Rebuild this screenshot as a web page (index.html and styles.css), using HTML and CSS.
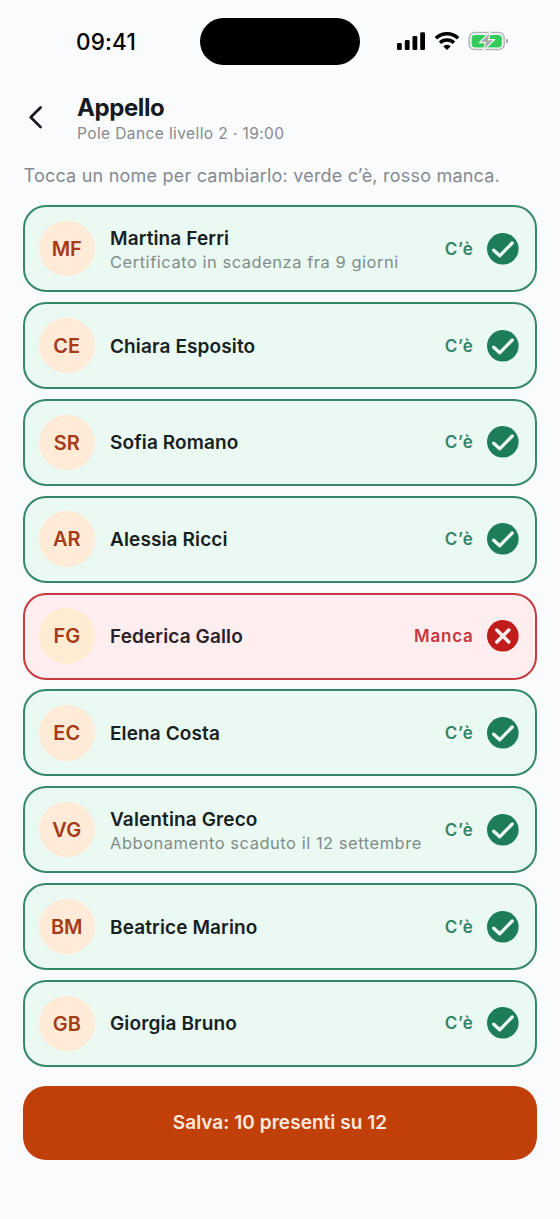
FILE: index.html
```html
<!DOCTYPE html>
<html lang="it">
<head>
<meta charset="utf-8">
<title>Appello</title>
<link rel="stylesheet" href="styles.css">
</head>
<body>
<svg class="defs" width="0" height="0" aria-hidden="true">
  <symbol id="check" viewBox="0 0 32 32"><circle cx="15.8" cy="15.8" r="15.8" fill="#1c7d58"/><path d="M6.7 17.2L12.7 22.8L25.2 10" fill="none" stroke="#effbf5" stroke-width="3.3" stroke-linecap="round" stroke-linejoin="round"/></symbol>
  <symbol id="cross" viewBox="0 0 32 32"><circle cx="15.8" cy="15.8" r="15.8" fill="#c11c1c"/><path d="M9.8 10L21.8 22M21.8 10L9.8 22" fill="none" stroke="#ffeeee" stroke-width="3.5" stroke-linecap="round"/></symbol>
</svg>
<div class="screen">
  <div class="status">
    <div class="time">09:41</div>
    <div class="island"></div>
    <svg class="indicators" width="116" height="24" viewBox="0 0 116 24">
      <g fill="#000">
        <rect x="1" y="14" width="4.8" height="7" rx="1.3"/>
        <rect x="8.8" y="11" width="4.8" height="10" rx="1.3"/>
        <rect x="16.5" y="7" width="4.8" height="14" rx="1.3"/>
        <rect x="24.2" y="3.3" width="4.8" height="17.7" rx="1.3"/>
      </g>
      <g fill="none" stroke="#000" stroke-width="3.5">
        <path d="M39.9 9.3A16 16 0 0 1 62.1 9.3"/>
        <path d="M44 13.7A10.2 10.2 0 0 1 58 13.7"/>
      </g>
      <path d="M47.2 17.2A5.4 5.4 0 0 1 54.8 17.2L51 21Z" fill="#000"/>
      <rect x="73.2" y="3.6" width="35" height="17" rx="5.4" fill="none" stroke="#b1b3b4" stroke-width="1.5"/>
      <rect x="75.6" y="6" width="30.2" height="12.4" rx="3.4" fill="#32cc5a"/>
      <path d="M110 9.6V14.8Q112.3 14 112.3 12.2Q112.3 10.4 110 9.6Z" fill="#a6a8aa"/>
      <path d="M94.4 2.5L83.4 13.6H89.4L87 22L98.6 10.6H92.6Z" fill="#a9abad" stroke="#f4fbf8" stroke-width="1.1" stroke-linejoin="round"/>
    </svg>
  </div>
  <header class="header">
    <svg class="back" width="24" height="28" viewBox="0 0 24 28"><path d="M16.6 4.5L6.7 14.3L16.6 24.1" fill="none" stroke="#14161d" stroke-width="2.7" stroke-linecap="round" stroke-linejoin="round"/></svg>
    <div>
      <h1 class="title">Appello</h1>
      <div class="subtitle">Pole Dance livello 2 · 19:00</div>
    </div>
  </header>
  <p class="hint">Tocca un nome per cambiarlo: verde c’è, rosso manca.</p>
  <main class="list">
    <div class="card"><div class="avatar">MF</div><div class="person"><div class="name">Martina Ferri</div><div class="note">Certificato in scadenza fra 9 giorni</div></div><div class="state">C’è</div><svg class="mark"><use href="#check"/></svg></div>
    <div class="card"><div class="avatar">CE</div><div class="person"><div class="name">Chiara Esposito</div></div><div class="state">C’è</div><svg class="mark"><use href="#check"/></svg></div>
    <div class="card"><div class="avatar">SR</div><div class="person"><div class="name">Sofia Romano</div></div><div class="state">C’è</div><svg class="mark"><use href="#check"/></svg></div>
    <div class="card"><div class="avatar">AR</div><div class="person"><div class="name">Alessia Ricci</div></div><div class="state">C’è</div><svg class="mark"><use href="#check"/></svg></div>
    <div class="card absent"><div class="avatar">FG</div><div class="person"><div class="name">Federica Gallo</div></div><div class="state">Manca</div><svg class="mark"><use href="#cross"/></svg></div>
    <div class="card"><div class="avatar">EC</div><div class="person"><div class="name">Elena Costa</div></div><div class="state">C’è</div><svg class="mark"><use href="#check"/></svg></div>
    <div class="card"><div class="avatar">VG</div><div class="person"><div class="name">Valentina Greco</div><div class="note">Abbonamento scaduto il 12 settembre</div></div><div class="state">C’è</div><svg class="mark"><use href="#check"/></svg></div>
    <div class="card"><div class="avatar">BM</div><div class="person"><div class="name">Beatrice Marino</div></div><div class="state">C’è</div><svg class="mark"><use href="#check"/></svg></div>
    <div class="card"><div class="avatar">GB</div><div class="person"><div class="name">Giorgia Bruno</div></div><div class="state">C’è</div><svg class="mark"><use href="#check"/></svg></div>
  </main>
  <button class="save">Salva: 10 presenti su 12</button>
</div>
</body>
</html>
```
FILE: styles.css
```css
* { box-sizing: border-box; }
body { margin: 0; background: #fafbfd; font-family: Inter, sans-serif; color: #171a20; }
.defs { display: block; }
.screen { width: 560px; height: 1219px; padding: 0 23px; overflow: hidden; }
.status { display: grid; grid-template-columns: 177px 160px 1fr; height: 93px; padding-top: 18px; align-items: start; }
.time { padding: 10px 0 0 53px; font-size: 22.5px; line-height: 28px; font-weight: 550; color: #000; letter-spacing: 0.2px; }
.island { height: 47px; border-radius: 24px; background: #000; }
.indicators { margin: 11px 0 0 36px; }
.header { display: flex; height: 70px; }
.back { margin: 10px 29px 0 1px; flex: none; }
.title { margin: 0; font-size: 24px; line-height: 30px; font-weight: 700; letter-spacing: -0.4px; }
.subtitle { font-size: 15.5px; line-height: 22px; color: #858990; letter-spacing: 0.4px; }
.hint { margin: 0; padding-left: 0.5px; font-size: 18px; line-height: 25px; color: #858990; letter-spacing: 0.21px; white-space: nowrap; }
.list { display: flex; flex-direction: column; gap: 9.95px; margin-top: 17.3px; }
.card { display: flex; align-items: center; height: 86.9px; padding: 0 16.5px 0 14px; border: 2px solid #35876a; border-radius: 23px; background: #eaf9f2; }
.avatar { width: 55.5px; height: 55.5px; border-radius: 50%; background: #ffebd7; color: #a53b18; font-size: 20px; font-weight: 600; line-height: 56px; text-align: center; flex: none; }
.person { flex: 1; margin-left: 15.5px; padding-top: 1px; white-space: nowrap; }
.name { font-size: 19px; line-height: 25px; font-weight: 600; color: #17211f; letter-spacing: 0.12px; }
.note { font-size: 16.5px; line-height: 22px; color: #808d8a; letter-spacing: 0.52px; }
.state { font-size: 17px; line-height: 24px; font-weight: 600; color: #358468; letter-spacing: 0.75px; }
.mark { width: 32px; height: 32px; margin-left: 13px; flex: none; }
.absent { border-color: #c43a40; background: #ffeeef; }
.absent .avatar { background: #ffecd3; }
.absent .name { color: #2a2228; }
.absent .state { color: #c93640; }
.save { display: block; width: 514px; height: 74px; margin: 19px 0 0; padding: 0; border: 0; border-radius: 23px; background: #c1400a; color: #ffe9dc; font: 600 19px/74px Inter, sans-serif; letter-spacing: 0.05px; text-align: center; }
```
